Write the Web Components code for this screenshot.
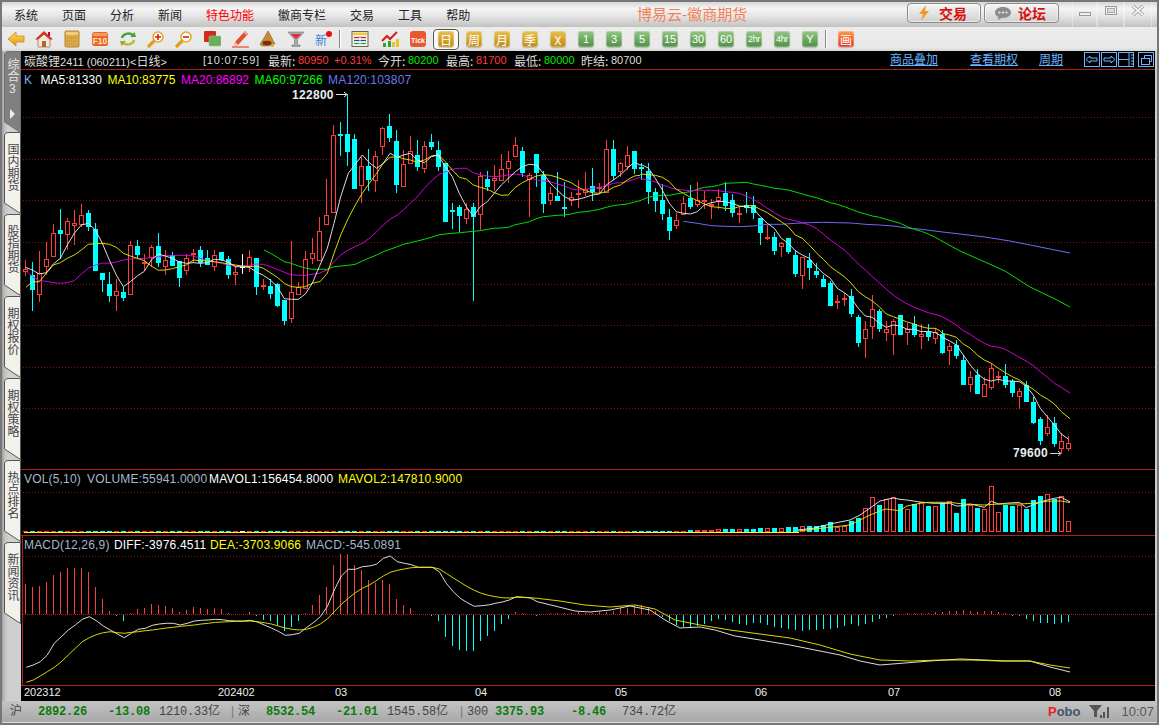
<!DOCTYPE html>
<html lang="zh">
<head>
<meta charset="utf-8">
<title>博易云-徽商期货</title>
<style>
html,body{margin:0;padding:0;background:#000;overflow:hidden}
body{width:1159px;height:725px;font-family:"Liberation Sans","Noto Sans CJK SC",sans-serif}
</style>
</head>
<body>
<fx-window>
  <fx-titlebar></fx-titlebar>
  <fx-toolbar></fx-toolbar>
  <fx-main>
    <fx-sidetabs></fx-sidetabs>
    <fx-chart></fx-chart>
  </fx-main>
  <fx-status></fx-status>
</fx-window>
<script>
const CJK='"Noto Sans CJK SC",sans-serif';
function def(name,css,html,after){
  customElements.define(name,class extends HTMLElement{
    constructor(){super();const r=this.attachShadow({mode:'open'});
      r.innerHTML='<style>'+css+'</style>'+(typeof html==='function'?html(this):html);}
    connectedCallback(){if(after&&!this._d){this._d=1;after(this.shadowRoot,this);}}
  });
}

def('fx-window',`:host{display:flex;flex-direction:column;width:1159px;height:725px;box-sizing:border-box;border:2px solid #777;border-bottom-width:2px;background:#ccc}`,'<slot></slot>');
def('fx-main',`:host{display:flex;height:650px;flex:none;padding-right:2px;background:#ccc}`,'<slot></slot>');

/* ---------- title bar ---------- */
def('fx-titlebtn',`:host{display:flex;align-items:center;box-sizing:border-box;height:20px;border:1px solid #8a8a8a;border-radius:4px;
  background:linear-gradient(#f6f6f6,#e4e4e4 50%,#d0d0d0);padding-left:9px;gap:8px;color:#d81010;font:bold 14px ${CJK};box-shadow:inset 0 0 0 1px #fff8;white-space:nowrap}
  svg{display:block}`,'<slot name="i"></slot><slot></slot>');
def('fx-titlebar',`:host{display:flex;align-items:center;height:25px;flex:none;background:linear-gradient(#d6d6d6,#f5f5f5 25%,#e6e6e6 55%,#c2c2c2);}
  nav{display:flex;gap:24px;padding-left:12px;font:12px ${CJK};color:#222;width:467px;box-sizing:border-box;flex:none;padding-bottom:1px;white-space:nowrap}
  nav span{display:block;flex:none}
  .hot{color:#f00}
  h1{margin:0 0 0 168px;font:15px ${CJK};color:#f2825a;white-space:nowrap;width:120px;flex:none;padding-bottom:2px}
  .btns{display:flex;gap:3px;margin-left:150px;padding-bottom:3px;flex:none}
  fx-titlebtn.a{width:74px}fx-titlebtn.b{width:75px;gap:6px}
  .ctl{display:flex;margin-left:13px;height:25px;flex:none}
  .ctl div{display:flex;align-items:flex-start;justify-content:center;border-right:1px solid #ffffff55;border-left:1px solid #ffffff55;padding-top:3px;box-sizing:border-box}
  `,`<nav><span>系统</span><span>页面</span><span>分析</span><span>新闻</span><span class="hot">特色功能</span><span>徽商专栏</span><span>交易</span><span>工具</span><span>帮助</span></nav>
  <h1>博易云-徽商期货</h1>
  <div class="btns">
   <fx-titlebtn class="a"><svg slot="i" width="14" height="16" viewBox="0 0 14 16"><path d="M9 0 L2 9 H6 L4 16 L12 6 H8 Z" fill="#f09a20"/></svg>交易</fx-titlebtn>
   <fx-titlebtn class="b"><svg slot="i" width="18" height="16" viewBox="0 0 18 16"><path d="M9 2C4 2 1 4.600 1 7.500c0 2 1.400 3.600 3.500 4.500L3.500 15 8 12.800c.4.100.700.100 1 .100 5 0 8-2.500 8-5.400S14 2 9 2z" fill="#8c8c8c"/><circle cx="5.500" cy="7.500" r="1.100" fill="#eee"/><circle cx="9" cy="7.500" r="1.100" fill="#eee"/><circle cx="12.500" cy="7.500" r="1.100" fill="#eee"/></svg>论坛</fx-titlebtn>
  </div>
  <div class="ctl">
   <div style="width:25px"><svg width="14" height="14" viewBox="0 0 14 14"><rect x="1.500" y="7.500" width="11" height="3" fill="#eee" stroke="#999"/></svg></div>
   <div style="width:27px"><svg width="14" height="12" viewBox="0 0 14 12"><rect x="1.500" y="1.500" width="11" height="8" fill="none" stroke="#999" stroke-width="1"/><rect x="3.500" y="3.500" width="7" height="4" fill="#ddd" stroke="#aaa"/></svg></div>
   <div style="width:28px"><svg width="14" height="12" viewBox="0 0 14 12"><path d="M2 1 L12 10 M12 1 L2 10" stroke="#999" stroke-width="3.600"/><path d="M2 1 L12 10 M12 1 L2 10" stroke="#f4f4f4" stroke-width="1.800"/></svg></div>
  </div>`);

/* ---------- toolbar ---------- */
const IC={
 back:`<defs><linearGradient id="g1" x1="0" y1="0" x2="0" y2="1"><stop offset="0" stop-color="#ffd860"/><stop offset="1" stop-color="#e09a10"/></linearGradient></defs><polygon points="1,9 9,2 9,6 17,6 17,12 9,12 9,16" fill="url(#g1)" stroke="#c89018" stroke-width=".8"/>`,
 home:`<path d="M3 9 L9 4 L15 9 V17 H3Z" fill="#f4e6d6" stroke="#a88"/><rect x="7" y="11" width="4" height="6" fill="#b8642a"/><path d="M9 1 L18 9.500 L15 9.500 L9 4.500 L3 9.500 L0 9.500Z" fill="#d6301e"/><rect x="13" y="2" width="2" height="4" fill="#c03"/>`,
 note:`<rect x="2" y="1" width="14" height="16" rx="1" fill="#dca948" stroke="#b8862c"/><rect x="3" y="2" width="12" height="3" fill="#f0cf7c"/><path d="M4 8H14M4 11H14M4 14H12" stroke="#b88a34" stroke-dasharray="1 1"/>`,
 f10:`<rect x="1" y="2" width="16" height="14" rx="2.500" fill="#e8642a"/><rect x="2" y="3" width="14" height="3" fill="#f59a58"/><text x="9" y="14" font-size="8.500" font-weight="bold" text-anchor="middle" fill="#ffe9b0" font-family="Liberation Sans">F10</text>`,
 refresh:`<path d="M3 8 A6.500 5 0 0 1 14 5" fill="none" stroke="#4aa040" stroke-width="2.500"/><polygon points="11,7 17,7 15.500,2" fill="#4aa040"/><path d="M15 10 A6.500 5 0 0 1 4 13" fill="none" stroke="#b8c030" stroke-width="2.500"/><polygon points="7,11 1,11 2.500,16" fill="#90b030"/>`,
 zin:`<path d="M7 11 L2 16" stroke="#e0a020" stroke-width="3.200" stroke-linecap="round"/><circle cx="11" cy="7" r="5" fill="#fff" stroke="#e6a828" stroke-width="1.600"/><path d="M8 7H14M11 4V10" stroke="#e01818" stroke-width="1.600"/>`,
 zout:`<path d="M7 11 L2 16" stroke="#e0a020" stroke-width="3.200" stroke-linecap="round"/><circle cx="11" cy="7" r="5" fill="#fff" stroke="#e6a828" stroke-width="1.600"/><path d="M8 7H14" stroke="#e01818" stroke-width="1.600"/>`,
 multi:`<rect x="1" y="1" width="12" height="11" rx="1" fill="#d8281c"/><rect x="6" y="6" width="12" height="10" rx="1" fill="#6cae5c" stroke="#8fc880" stroke-width=".6"/>`,
 pen:`<polygon points="4,12 14,1 17,4 7,15 3,16" fill="#e05030"/><polygon points="14,1 17,4 15.500,5.500 12.500,2.500" fill="#f0a080"/><polygon points="4,12 7,15 3,16" fill="#f4d8a0"/><path d="M1 17H18" stroke="#e02818"/>`,
 bell:`<path d="M9 1 C7 4 6 7 3 11 C1 14 1 15 2 15.500 C5 16.500 12 16.500 16 13.500 C13 10 12 5 9 1Z" fill="#c88a30" stroke="#8a5a18" stroke-width=".6"/><ellipse cx="8" cy="13" rx="4.500" ry="2.200" fill="#7a2c10"/><circle cx="13.500" cy="15.500" r="1.500" fill="#e0b040"/>`,
 filter:`<path d="M1 2 H17 L10.500 9.500 V15 H13 V16.500 H5 V15 H7.500 V9.500 Z" fill="#aaa" stroke="#777" stroke-width=".6"/><path d="M3.500 4 H14.500 L9 9Z" fill="#e03040"/>`,
 table:`<rect x="1" y="1.500" width="16" height="15" fill="#f8f4e8" stroke="#665"/><rect x="2" y="2.500" width="14" height="2.500" fill="#f0c840"/><path d="M3 7.500H15" stroke="#d02020" stroke-width="1.200"/><path d="M3 10.500H15" stroke="#2040c0" stroke-width="1.200"/><path d="M3 13.500H15" stroke="#20a040" stroke-width="1.200"/><path d="M9 6V15" stroke="#f8f4e8"/>`,
 chart:`<rect x="2" y="13" width="3" height="4" fill="#30a030"/><rect x="7" y="11" width="3" height="6" fill="#30a030"/><rect x="11" y="12" width="3" height="5" fill="#e8c030"/><rect x="15" y="9" width="3" height="8" fill="#e8c030"/><path d="M1 11 L6 6 L9 9 L16 2" fill="none" stroke="#d81c1c" stroke-width="2"/>`,
 tick:`<rect x="1" y="1" width="16" height="16" rx="3" fill="#e8582c"/><text x="9" y="12.500" font-size="8" font-weight="bold" text-anchor="middle" fill="#fff" font-family="Liberation Sans" textLength="14" lengthAdjust="spacingAndGlyphs">Tick</text>`
};
def('fx-icon',`:host{display:flex;width:28px;height:22px;align-items:center;justify-content:center;flex:none}svg{display:block}`,
 e=>`<svg width="18" height="18" viewBox="0 0 18 18">${IC[e.getAttribute('n')]}</svg>`);
def('fx-newicon',`:host{display:flex;position:relative;width:28px;height:22px;align-items:center;justify-content:center;flex:none;font:12px ${CJK};color:#3a86dc}
  i{position:absolute;right:6px;top:3px;width:6px;height:6px;border-radius:50%;background:#e81010}`,`<span style="margin-right:6px">新</span><i></i>`);
def('fx-period',`:host{display:flex;width:28px;height:22px;align-items:center;justify-content:center;flex:none}
 :host([on]) .w{border:1px solid #555;background:#fbfbfb;box-shadow:0 0 0 1px #eee}
 .w{display:flex;align-items:center;justify-content:center;box-sizing:border-box;width:26px;height:21px;border-radius:4px;border:1px solid transparent}
 b{display:flex;align-items:center;justify-content:center;width:16px;height:16px;border-radius:3px;font:400 12px ${CJK};color:#fff;white-space:nowrap;overflow:hidden;
   box-shadow:inset 0 0 0 1px #ffffff40,0 1px 1px #0003}
 :host([k=g]) b{background:linear-gradient(#eac050,#c08a10)}
 :host([k=v]) b{background:linear-gradient(#92c882,#4f9044);font-family:"Liberation Sans",sans-serif;font-size:11px}
 :host([k=t]) b{background:linear-gradient(#92c882,#4f9044);font-family:"Liberation Sans",sans-serif;font-size:9px;letter-spacing:-.4px}
 :host([k=r]) b{background:linear-gradient(#ff9a50,#e83020)}`,'<div class="w"><b><slot></slot></b></div>');
def('fx-toolbar',`:host{display:flex;height:24px;flex:none;align-items:flex-start;background:linear-gradient(#ececec,#e8e8e8 85%,#d8d8d8);padding-top:1px;box-sizing:border-box}
 .sep{width:2px;height:18px;margin-top:2px;background:#888;flex:none;border-right:1px solid #fff;box-sizing:border-box}`,
 `<fx-icon n="back"></fx-icon><fx-icon n="home"></fx-icon><fx-icon n="note"></fx-icon><fx-icon n="f10"></fx-icon><fx-icon n="refresh"></fx-icon><fx-icon n="zin"></fx-icon><fx-icon n="zout"></fx-icon><fx-icon n="multi"></fx-icon><fx-icon n="pen"></fx-icon><fx-icon n="bell"></fx-icon><fx-icon n="filter"></fx-icon><fx-newicon></fx-newicon>
 <div class="sep" style="margin-left:1px;margin-right:7px"></div>
 <fx-icon n="table" style="margin-left:-2px;margin-right:2px"></fx-icon><fx-icon n="chart"></fx-icon><fx-icon n="tick"></fx-icon>
 <fx-period k="g" on>日</fx-period><fx-period k="g">周</fx-period><fx-period k="g">月</fx-period><fx-period k="g">季</fx-period><fx-period k="g">X</fx-period>
 <fx-period k="v">1</fx-period><fx-period k="v">3</fx-period><fx-period k="v">5</fx-period><fx-period k="v">15</fx-period><fx-period k="v">30</fx-period><fx-period k="v">60</fx-period><fx-period k="t">2hr</fx-period><fx-period k="t">4hr</fx-period><fx-period k="v">Y</fx-period>
 <div class="sep" style="margin-left:1px;margin-right:5px"></div>
 <fx-period k="r">画</fx-period>`);

/* ---------- side tabs ---------- */
def('fx-tab',`:host{display:block;position:relative;width:19px;height:82px;flex:none;font:12px/12px ${CJK};color:#444}
  :host([h="81"]){height:81px}
  :host([h="85"]){height:85px}
  svg{position:absolute;left:0;top:0}
  .t{position:relative;writing-mode:vertical-rl;width:12px;margin:11px 0 0 5px;white-space:nowrap;line-height:12px}
  :host([on]){color:#e4e4e4}
  :host([on]) .t{margin-top:7px}
  .n{position:relative;display:block;margin-left:7px;font:12px/10px "Liberation Sans",sans-serif;color:#e4e4e4;margin-top:2px}
  .a{position:absolute;left:8px;top:58px;width:0;height:0;border-left:5px solid #eee;border-top:5px solid transparent;border-bottom:5px solid transparent}`,
  e=>{const on=e.hasAttribute('on');const f=on?'#808080':'#f2f1ea';
   return `<svg width="19" height="85" viewBox="0 0 19 85"><path d="M2.500 ${on?71:71} V4 Q2.500 .5 7 .5 H18.500 V81.500 Z" fill="${f}" stroke="${on?'#707070':'#555'}"/></svg>
   <div class="t"><slot></slot></div>${on?'<span class="n">3</span><i class="a"></i>':''}`});
def('fx-sidetabs',`:host{display:flex;flex-direction:column;width:19px;flex:none;background:linear-gradient(90deg,#9c9c9c,#bcbcbc 2px,#cfcfcf 6px)}`,
 `<fx-tab on h="81">综合</fx-tab><fx-tab>国内期货</fx-tab><fx-tab>股指期货</fx-tab><fx-tab>期权报价</fx-tab><fx-tab>期权策略</fx-tab><fx-tab>热点排名</fx-tab><fx-tab h="85">新闻资讯</fx-tab>`);

/* ---------- chart data (pixel geometry read from the picture) ---------- */
const SEG=[
 [20,90,0,`r 538 546 510 558,c 556 600 516 662,r 548 616 484 636,r 508 530 456 556,r 428 500 402 500,c 420 432 358 506,r 392 434 384 480,r 398 408 360 466,r 374 406 342 410,c 370 410 360 422,c 416 544 400 544,c 550 570 548 606,c 582 618 546 636,r 604 618 568 662,c 606 624 590 632,r 466 616 454 616,c 468 496 450 504,r 516 522 492 544,r 472 504 464 530,c 468 518 430 532,r 510 530 480 554,c 496 528 486 528,c 514 564 514 590,r 504 544 492 556,r 488 496 478 520,c 480 520 468 532,c 504 524 480 526,r 496 532 480 542,c 486 510 486 512,c 508 556 498 566,r 546 556 530 584,w 532 532 492 552,r 502 532 480 546,c 504 590 504 614,r 586 590 568 600,c 588 612 568 626,c 582 648 580 650,c 630 694 630 704,r 606 686 454 700,r 592 614 576 616,r 508 598 484 598,r 490 508 444 522,r 422 512 382 512`],
 [320,100,43,`r 346 376 238 376,r 106 340 76 340,c 102 104 66 168,c 102 155 -18 198,c 118 266 102 266,r 198 258 170 310,c 198 240 148 274,r 168 242 152 276,r 84 140 82 166,c 78 114 42 126,c 124 254 90 278,r 192 262 150 262,r 154 192 108 192,c 166 200 120 212,r 138 208 124 218,c 126 140 102 150,c 150 202 124 214,c 190 366 190 366,c 330 332 308 386,c 322 348 316 396,r 328 356 308 372,c 322 350 310 602,r 228 344 216 390,c 236 262 212 272,r 234 244 196 274,r 208 244 162 244,r 184 208 152 248,r 136 172 112 172,c 154 218 142 230,r 224 240 220 352,c 162 220 162 260,c 224 312 212 340,r 280 302 262 314,c 288 302 216 302,c 322 324 246 350,r 290 302 276 318,r 280 286 240 324,r 268 280 216 288,c 258 276 204 302,r 260 266 250 280,r 148 278 120 278,c 148 228 120 240,r 190 216 186 230,r 164 200 138 210,c 154 206 154 222`],
 [640,160,88,`c 22 26 8 60,c 34 96 10 132,c 96 124 84 156,c 120 162 72 180,c 172 214 148 240,r 180 198 160 208,r 130 166 108 166,c 114 142 76 148,r 120 134 66 140,r 121 122 94 146,r 131 133 118 176,r 112 124 88 146,c 98 138 66 152,c 120 160 102 172,r 160 163 140 190,c 136 144 96 158,c 134 160 108 176,c 174 218 174 254,r 232 233 196 240,c 232 272 216 284,r 250 260 246 290,c 234 276 234 282,c 286 342 270 352,r 292 348 292 386,c 300 324 280 360,c 334 344 310 354,c 358 380 346 382,c 370 438 364 438,r 423 424 406 446,r 414 417 398 438,c 408 462 388 470,c 472 548 466 560,r 506 536 484 594,r 446 502 406 536,c 454 506 448 516,r 508 520 484 544,r 482 526 476 586`],
 [900,300,125,`c 46 104 46 104,r 88 100 70 136,c 72 104 48 110,r 103 112 72 146,c 96 110 72 122,r 96 116 84 132,c 102 160 90 162,r 138 152 128 194,c 136 168 120 178,c 180 254 166 254,r 232 254 214 276,c 226 282 208 282,r 252 290 232 290,r 204 264 188 270,r 228 230 212 250,c 228 254 192 264,c 244 278 238 290,r 274 292 264 326,c 256 306 242 306,c 306 370 292 372,c 358 424 352 436,r 382 402 346 408,c 370 432 352 440,r 424 446 400 462,r 428 446 408 454`]
];
const C=[];
SEG.forEach(([ox,oy,st,s])=>s.split(',').forEach((r,k)=>{const p=r.split(' ');const v=p.slice(1).map(Number);
  C[st+k]={t:p[0],a:Math.round(oy+v[0]/3),b:Math.round(oy+v[1]/3),h:Math.round(oy+v[2]/3),l:Math.round(oy+v[3]/3)};}));

function line(segs,extra){let out=[],last=-1e9;
  segs.forEach(([ox,oy,str])=>{const n=str.trim().split(/[\s,]+/).map(Number);
    for(let i=0;i<n.length;i+=2){const x=ox+n[i]/3,y=oy+n[i+1]/3;if(x>last+.5){out.push(x.toFixed(1)+','+y.toFixed(1));last=x;}}});
  (extra||[]).forEach(([x,y])=>{if(x>last){out.push(x+','+y);last=x;}});
  return out.join(' ');}

const MA5=line([[20,90,`16,532 37,540 58,552 79,548 100,522 121,505 142,465 163,430 184,405 205,400 226,420 247,460 268,510 289,555 310,590 331,575 352,558 373,544 394,510 415,492 436,498 457,505 478,516 499,520 520,518 541,520 562,518 583,508 604,510 625,516 646,530 667,530 688,532 709,546 730,556 751,570 772,590 793,626 814,628 835,628 856,612 877,580 898,530`],
 [320,100,`0,495 22,445 42,370 62,290 85,220 127,165 148,188 170,205 190,190 210,160 232,172 250,165 271,160 292,180 313,188 334,170 355,165 376,200 397,230 418,280 439,320 460,348 481,320 502,305 523,280 544,255 565,235 586,215 607,200 628,193 649,195 670,220 691,250 712,270 733,290 754,300 775,298 796,292 817,285 838,282 859,255 880,240 901,225 922,205 943,187 960,195`],
 [640,160,`4,14 25,24 46,55 67,90 88,130 109,155 130,160 151,162 172,155 193,135 214,128 235,124 256,125 277,130 298,138 319,140 340,145 361,170 382,190 403,205 424,235 445,250 466,272 487,285 508,295 529,320 550,340 571,355 592,385 613,398 634,415 655,445 676,468 697,472 718,490 739,502 760,495 781,498 802,508 823,508 844,515 865,514 886,518 900,526`],
 [900,300,`127,112 148,122 169,135 190,165 211,195 232,220 253,238 274,243 295,238 316,243 337,243 358,245 379,258 400,285 421,325 442,350 463,375 484,402 505,417`]]);
const MA10=line([[20,90,`18,592 37,576 58,575 79,550 100,525 121,518 142,505 163,495 184,480 205,463 226,461 247,460 268,463 289,472 310,490 331,498 352,505 373,512 394,528 415,541 436,540 457,536 478,530 499,525 520,510 541,512 562,512 583,515 604,518 625,522 646,525 667,528 688,530 709,528 730,535 751,548 772,562 793,580 814,590 835,592 856,590 877,580 898,575`],
 [320,100,`0,545 22,520 42,460 62,405 85,355 106,315 127,280 148,250 170,220 190,190 210,172 232,170 250,176 271,180 292,187 313,180 334,168 355,164 376,185 397,210 418,232 439,237 460,255 481,262 502,268 523,278 544,286 565,285 586,262 607,248 628,238 649,228 670,224 691,226 712,232 733,240 754,248 775,262 796,272 817,278 838,280 859,275 880,262 901,255 922,240 943,228 960,226`],
 [640,160,`4,42 25,44 46,46 67,52 88,65 109,88 130,100 151,112 172,122 193,132 214,140 235,142 256,145 277,146 298,140 319,137 340,137 361,148 382,158 403,172 424,185 445,200 466,225 487,235 508,255 529,278 550,298 571,320 592,335 613,350 634,370 655,395 676,410 697,423 718,440 739,462 760,470 781,478 802,486 823,492 844,500 865,505 886,505 900,512`],
 [900,300,`127,100 148,105 169,112 190,132 211,145 232,165 253,180 274,190 295,205 316,218 337,230 358,240 379,255 400,268 421,285 442,297 463,312 484,335 510,356`]]);
const MA20=line([[20,90,`18,542 37,560 58,572 79,574 100,578 121,580 142,578 163,572 184,552 205,535 226,526 247,519 268,520 289,516 310,510 331,507 352,506 373,505 394,503 415,500 436,497 457,497 478,496 499,496 520,498 541,505 562,512 583,516 604,520 625,526 646,528 667,528 688,526 709,522 730,523 751,530 772,538 793,547 814,554 835,556 856,556 877,553 898,550`],
 [320,100,`0,518 22,510 42,485 62,465 85,450 127,430 148,415 170,395 190,375 210,358 232,345 250,330 271,310 292,290 313,265 334,243 355,225 376,215 397,208 418,205 439,205 460,218 481,225 502,228 523,230 544,228 565,225 586,222 607,225 628,232 649,240 670,243 691,245 712,252 733,258 754,267 775,270 796,268 817,265 838,262 859,258 880,250 901,248 922,245 943,238 960,232`],
 [640,160,`4,56 25,60 46,66 67,75 88,82 109,88 130,90 151,92 172,91 193,91 214,91 235,92 256,95 277,97 298,100 319,108 340,118 361,130 382,145 403,158 424,170 445,178 466,182 487,188 508,195 529,205 550,222 571,240 592,255 613,270 634,290 655,312 676,330 697,350 718,368 739,388 760,405 781,420 802,432 823,442 844,450 865,458 900,467`],
 [900,300,`127,50 148,62 169,75 190,92 211,103 232,118 253,130 274,139 295,141 316,148 337,160 358,172 379,183 400,197 421,215 442,232 463,250 484,262 510,279`]]);
const MA60=line([[20,90,`732,480 751,490 772,502 793,515 814,520 835,528 856,534 877,538 898,538`],
 [320,100,`0,508 22,508 42,500 62,498 85,496 106,493 127,483 148,474 170,465 190,455 210,448 232,440 250,433 271,428 292,423 313,418 334,412 355,405 376,402 397,400 418,398 439,396 460,394 481,392 502,388 523,385 544,384 565,382 586,374 607,370 628,365 649,356 670,350 691,348 712,346 733,345 754,342 775,337 796,335 817,332 838,328 859,322 880,317 901,314 922,312 943,306 960,302`],
 [640,160,`4,120 25,112 46,108 67,106 88,106 109,102 130,98 151,95 172,88 193,82 214,80 235,76 256,70 277,69 298,68 319,67 340,72 361,76 382,80 403,85 424,87 445,90 466,96 487,102 508,108 529,113 550,120 571,128 592,133 613,140 634,148 655,156 676,162 697,168 718,172 739,178 760,184 781,190 802,200 823,208 844,214 865,222 886,232 900,240`]],
 [[960,251],[985,262],[1005,271],[1030,287],[1057,300],[1070,307]]);
const MA120=line([[640,160,`130,184 172,190 214,197 256,199 298,200 340,198 382,193 424,193 466,190 508,188 550,187 592,188 634,189 676,193 718,195 760,198 802,204 844,208 900,215`]],
 [[960,234],[985,237],[1010,241],[1040,247],[1070,253]]);

const VT=[530,530,530,530,529,529,529,529,529,529,528,528,528,528,527,527,526,526,526,525,522,527,526,521,518,508,497,505,499,497];
const VZ=[612,628,612,606,618,618,610,604,638,597,614,623,628,559,637,614,618,615,627,600,588,582,596,589,664];
const VW=line([[900,300,`0,598 20,600 60,606 100,610 148,610 170,618 190,617 211,612 253,622 274,604 295,612 316,610 358,607 379,623 400,614 421,606 442,600 463,595 484,592 510,606`]]);
const VY=line([[900,300,`0,632 20,618 60,610 85,607 148,607 190,612 253,615 295,612 358,612 400,610 442,604 484,603 510,608`]]);
const VW0='798,530 815,528 830,524 850,520 860,515 870,508 880,501 893,498 ',VY0='798,531 820,528.500 850,525 870,515 885,509 ';

const MZ=[343,351,348,336,316,306,294,294,294,306,351,388,424,437,452,431,417,415,402,405,408,414,426,420,411,415,417,414,417,430,432,432,426,437,447,452,464,482,468,452,429,405,375,351,285,253,253,285,300,330,339,330,342,387,405,414,432,433,435,450,500,525,537,540,540,510,495,480,459,444,426,430,432,437];
const MD=[0,1,1,1,1,2,1,1,2,2,3,6,6,8,9,7,3,-2,-6,-10,-12,-13,-11,-9,-6,-4,-5,-7,-9,-10,-8,-8,-10,-12,-13,-14,-15,-16,-15,-15,-14,-14,-13,-11,-9,-11,-9,-7,-4,-3,-1,0,1,1,1,1,2,2,3,3,4,3,2,3,3,2,1,-1,-1,-4,-6,-8,-8,-9,-8,-7];
const MW=line([[20,470,`19,592 40,585 61,575 82,555 103,520 124,500 145,480 166,465 187,448 208,440 229,452 250,468 271,480 292,492 313,503 334,490 355,478 376,475 397,466 418,462 439,460 460,460 481,465 502,460 523,453 544,451 565,450 586,448 607,449 628,452 649,453 670,453 691,451 712,456 733,465 754,474 775,484 796,496 817,494 838,490 859,473 880,458 901,440 922,410 943,360 964,318 985,298 1006,298 1027,290 1048,288 1069,283 1090,265 1111,258 1132,275 1153,280 1174,284 1195,292 1216,292 1237,292 1258,305 1279,340 1300,365 1321,385 1342,398 1363,409 1384,407 1405,405 1426,400 1447,396 1468,390 1489,380 1510,382 1531,384 1552,395`]],
 [[555,606],[575,611],[590,612],[610,610],[630,606],[650,610],[665,620],[680,628],[700,627],[715,630],[735,636],[760,640],[790,645],[815,650],[840,655],[860,661],[880,665],[905,663],[930,661],[960,659],[985,660],[1005,661],[1030,661],[1050,667],[1070,672]]);
const MY=line([[20,470,`19,637 40,630 61,618 82,605 103,592 124,575 145,555 166,535 187,515 208,503 229,494 250,488 271,485 292,488 313,490 334,487 355,485 376,482 397,480 418,477 439,474 460,472 481,469 502,467 523,465 544,462 565,460 586,457 607,456 628,455 649,454 670,454 691,453 712,455 733,458 754,462 775,468 796,474 817,478 838,480 859,478 880,472 901,462 922,447 943,425 964,403 985,385 1006,368 1027,355 1048,345 1069,332 1090,318 1111,307 1132,301 1153,297 1174,293 1195,292 1216,292 1237,292 1258,297 1279,310 1300,324 1321,337 1342,350 1363,361 1384,370 1405,376 1426,380 1447,383 1468,384 1489,382 1510,382 1531,383 1552,385`]],
 [[560,601],[585,605],[610,607],[635,605],[655,609],[675,620],[700,625],[730,630],[760,634],[790,638],[820,645],[850,654],[880,660],[910,661],[940,660],[970,660],[1000,661],[1030,661],[1050,665],[1070,668]]);

function drawSvg(){
  const R='#ff3c3c',CY='#00ffff',X=i=>25+7*i;let s='';
  // grid
  [117,159,200,242,284,325,367,408,492,556,614].forEach(y=>{
    s+=`<path d="M23 ${y}.5H1155" stroke="${y==614?'#c01818':'#8a1010'}" stroke-dasharray="1 ${y==614?1:2}" shape-rendering="crispEdges"/>`;});
  s+=`<path d="M22.500 536V685" stroke="#b02020" shape-rendering="crispEdges"/>`;
  // candles
  let k='';
  C.forEach((c,i)=>{const x=X(i),col=c.t=='r'?R:c.t=='c'?CY:'#fff',h=c.b-c.a;
    if(h<=1){
      k+=`<rect x="${x}" y="${c.h}" width="1" height="${c.l-c.h}" fill="${col}"/><rect x="${x-2}" y="${c.a}" width="5" height="${c.t=='w'?1:2}" fill="${col}"/>`;
    }else if(c.t=='c'){
      k+=`<rect x="${x}" y="${c.h}" width="1" height="${c.l-c.h}" fill="${col}"/><rect x="${x-2}" y="${c.a}" width="5" height="${h}" fill="${col}"/>`;
    }else{
      if(c.h<c.a)k+=`<rect x="${x}" y="${c.h}" width="1" height="${c.a-c.h}" fill="${col}"/>`;
      if(c.l>c.b)k+=`<rect x="${x}" y="${c.b}" width="1" height="${c.l-c.b}" fill="${col}"/>`;
      k+=`<rect x="${x-1.5}" y="${c.a+.5}" width="4" height="${h-1}" fill="#000" stroke="${col}"/>`;
    }
  });
  s+=`<g shape-rendering="crispEdges">${k}</g>`;
  const pl=(p,c,w=.9)=>`<polyline points="${p}" fill="none" stroke="${c}" stroke-width="${w}" stroke-linejoin="round"/>`;
  s+=pl(MA120,'#6c6cf4',1)+pl(MA60,'#00e000',1)+pl(MA20,'#e800e8')+pl(MA10,'#f0f000')+pl(MA5,'#f4f4f4');
  // price markers
  s+=`<path d="M336 94.500H347M344 92l3 2.500-3 2.500" fill="none" stroke="#ddd"/><path d="M1050 453.500H1061M1058 451l3 2.500-3 2.500" fill="none" stroke="#ccc"/>`;
  // volume
  let v='';
  C.forEach((c,i)=>{const x=X(i),col=c.t=='r'?R:c.t=='c'?CY:'#fff';let top;
    if(i>=125)top=Math.round(300+VZ[i-125]/3);else if(i>=95)top=VT[i-95];else top=531;
    if(top>=531)v+=`<rect x="${x-2}" y="531" width="5" height="1" fill="${col}"/>`;
    else if(c.t=='c')v+=`<rect x="${x-2}" y="${top}" width="5" height="${532-top}" fill="${col}"/>`;
    else v+=`<rect x="${x-1.5}" y="${top+.5}" width="4" height="${531-top}" fill="none" stroke="${col}"/>`;
  });
  s+=`<g shape-rendering="crispEdges">${v}<rect x="24" y="532" width="775" height="1" fill="#ffff00"/></g>`;
  s+=pl(VW0+VW,'#f4f4f4')+pl(VY0+VY,'#f0f000');
  // macd
  let m='';
  C.forEach((c,i)=>{const x=X(i);let d=i<MZ.length?(433-MZ[i])/3:MD[i-MZ.length];d=Math.round(d);
    if(d>0)m+=`<rect x="${x}" y="${614-d}" width="1" height="${d}" fill="${R}"/>`;
    else if(d<0)m+=`<rect x="${x}" y="615" width="1" height="${-d}" fill="${CY}"/>`;});
  s+=`<g shape-rendering="crispEdges">${m}</g>`+pl(MW,'#f4f4f4')+pl(MY,'#f0f000');
  return `<svg width="1134" height="650" viewBox="21 51 1134 650">${s}</svg>`;
}

/* ---------- chart ---------- */
def('fx-chart',`:host{display:flex;flex-direction:column;position:relative;width:1134px;height:650px;flex:none;background:#000;color:#ddd;font:12px/14px "Liberation Sans",${CJK};overflow:hidden}
  svg.sv,.plot{position:absolute;left:0;top:0}
  .info{position:relative;display:flex;height:18px;border-bottom:1px solid #a82018;padding-left:3px;align-items:center;font-size:11px;white-space:nowrap;color:#ddd;flex:none;box-sizing:content-box}
  .info span{display:block;flex:none}
  .z{font:12px ${CJK}}
  .up{color:#ff3c3c}.dn{color:#00e800}
  .pane{position:relative;flex:none;box-sizing:border-box;border-bottom:1px solid #b02020}
  .lg{display:flex;padding:2px 0 0 3px;white-space:nowrap;position:relative}
  .lg span{display:block;flex:none;margin-right:5.500px}
  .wide span{letter-spacing:.17px;margin-right:5px}
  .mark{position:absolute;font:bold 12px/14px "Liberation Sans",sans-serif;color:#e8eef4;letter-spacing:.3px}
  .axis{display:flex;height:15px;padding-left:3px;flex:none;color:#eee;font-size:11px;line-height:13px;position:relative}
  .axis span{display:block;flex:none}
  .k{color:#7cb0e6}.w{color:#fff}.y{color:#ffff00}.m{color:#ff00ff}.g{color:#00ff00}.b{color:#6878ea}.s{color:#a4b8cc}`,
 ()=>`<div class="plot">${drawSvg().replace('<svg ','<svg class="sv" ')}</div>
 <div class="info">
  <span style="width:179px"><span class="z" style="display:inline">碳酸锂</span>2411 (060211)&lt;<span class="z" style="display:inline">日线</span>&gt;</span>
  <span style="width:65px;letter-spacing:.8px">[10:07:59]</span>
  <span style="width:30px" class="z">最新:</span><span class="up" style="width:36px">80950</span><span class="up" style="width:44px">+0.31%</span>
  <span style="width:30px" class="z">今开:</span><span class="dn" style="width:38px">80200</span>
  <span style="width:30px" class="z">最高:</span><span class="up" style="width:38px">81700</span>
  <span style="width:30px" class="z">最低:</span><span class="dn" style="width:37px">80000</span>
  <span style="width:30px" class="z">昨结:</span><span style="width:36px">80700</span>
  <u-links></u-links>
 </div>
 <div class="pane" style="height:400px">
  <div class="lg" style="padding-top:3px"><span class="k" style="margin-right:8.500px">K</span><span class="w">MA5:81330</span><span class="y">MA10:83775</span><span class="m">MA20:86892</span><span class="g">MA60:97266</span><span class="b" style="letter-spacing:.15px">MA120:103807</span></div>
  <div class="mark" style="left:271px;top:18px">122800</div>
  <div class="mark" style="left:992px;top:376px">79600</div>
 </div>
 <div class="pane" style="height:66px">
  <div class="lg wide"><span class="s" style="width:63px;margin:0">VOL(5,10)</span><span class="s" style="width:122px;margin:0">VOLUME:55941.0000</span><span class="w" style="width:129px;margin:0">MAVOL1:156454.8000</span><span class="y">MAVOL2:147810.9000</span></div>
 </div>
 <div class="pane" style="height:150px">
  <div class="lg wide"><span class="s" style="width:90px;margin:0">MACD(12,26,9)</span><span class="w" style="width:96px;margin:0">DIFF:-3976.4511</span><span class="y" style="width:96px;margin:0">DEA:-3703.9066</span><span class="s">MACD:-545.0891</span></div>
 </div>
 <div class="axis"><span style="width:194px">202312</span><span style="width:117px">202402</span><span style="width:140px">03</span><span style="width:140px">04</span><span style="width:140px">05</span><span style="width:133px">06</span><span style="width:161px">07</span><span>08</span></div>`);

def('u-links',`:host{display:block;position:absolute;left:0;top:0;width:1134px;height:18px;color:#6cb4ff;font:12px/14px ${CJK}}
  u{position:absolute;top:1px;white-space:nowrap}
  .b{position:absolute;top:1px;display:flex;gap:1px}
  svg{display:block}`,
 `<u style="left:869px">商品叠加</u><u style="left:949px">查看期权</u><u style="left:1018px">周期</u>
  <div class="b" style="left:1063px">
  <svg width="16" height="15" viewBox="0 0 16 15"><rect x=".5" y=".5" width="15" height="14" fill="none" stroke="#6cb4ff"/><path d="M2 7.500 L6 4 V6 H13 V9 H6 V11 Z" fill="none" stroke="#6cb4ff"/></svg>
  <svg width="16" height="15" viewBox="0 0 16 15"><rect x=".5" y=".5" width="15" height="14" fill="none" stroke="#6cb4ff"/><path d="M14 7.500 L10 4 V6 H3 V9 H10 V11 Z" fill="none" stroke="#6cb4ff"/></svg>
  <svg width="16" height="15" viewBox="0 0 16 15"><rect x=".5" y=".5" width="15" height="14" fill="none" stroke="#6cb4ff"/><path d="M1 7.500H11M11 1V14" stroke="#6cb4ff"/><path d="M13 3H15M13 6H15M13 9H15M13 12H15" stroke="#6cb4ff"/></svg>
  <svg width="16" height="15" viewBox="0 0 16 15" style="margin-left:3px"><rect x=".5" y=".5" width="15" height="14" fill="none" stroke="#6cb4ff"/><rect x="3.500" y="6.500" width="8" height="6" fill="none" stroke="#6cb4ff"/><path d="M6.500 6V3.500H13.500V9.500H12" fill="none" stroke="#6cb4ff"/></svg>
  </div>`);

/* ---------- status bar ---------- */
def('fx-status',`:host{display:flex;align-items:center;height:22px;flex:none;background:linear-gradient(#c4c4c4,#a8a8a8);padding-left:8px;box-sizing:border-box;
   font:12px/14px "Liberation Mono","Noto Sans CJK SC",monospace;letter-spacing:-.2px;color:#444;white-space:nowrap;border-bottom:1px solid #ddd}
  span{display:block;flex:none}
  b{display:block;flex:none;color:#0a7a0a}
  .sp{color:#777}
  .r{text-align:right}
  .p{font:bold 13px "Liberation Sans",sans-serif;letter-spacing:0;color:#44546a;margin-left:auto}
  .p i{font-style:normal;color:#f02020}
  .t{font:13px "Liberation Sans",sans-serif;letter-spacing:0;color:#555;margin:0 3px 0 10px}
  svg{margin-left:9px;flex:none;display:block}`,
 `<span style="width:28px;font-family:${CJK}">沪</span><b style="width:70px">2892.26</b><b style="width:51px">-13.08</b><span style="width:70px">1210.33亿</span><span class="sp" style="width:9px">|</span>
  <span style="width:28px;font-family:${CJK}">深</span><b style="width:70px">8532.54</b><b style="width:51px">-21.01</b><span style="width:71px">1545.58亿</span><span class="sp" style="width:9px">|</span>
  <span style="width:28px">300</span><b style="width:70px">3375.93</b><b class="r" style="width:41px;margin-right:16px">-8.46</b><span>734.72亿</span>
  <span class="p"><i>P</i>obo</span>
  <svg width="22" height="15" viewBox="0 0 22 15"><path d="M0 1H13L8 7V13H5V7Z" fill="#555"/><rect x="11" y="11" width="2" height="3" fill="#555"/><rect x="14" y="8" width="2" height="6" fill="#555"/><rect x="18" y="3" width="2" height="11" fill="#555"/></svg>
  <span class="t">10:07</span>`);
</script>
</body>
</html>
